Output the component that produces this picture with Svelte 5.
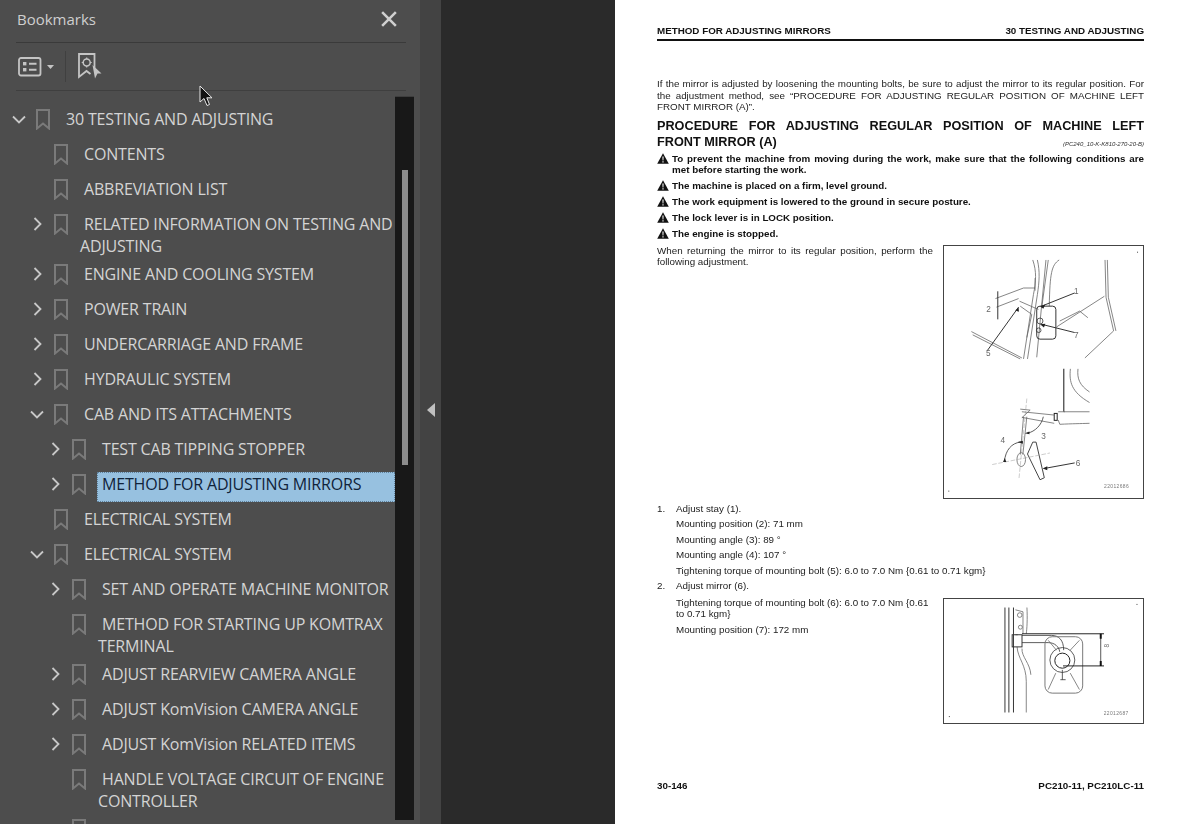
<script>
  const rows = [
    { l: 0, c: 'down', t: '30 TESTING AND ADJUSTING' },
    { l: 1, t: 'CONTENTS' },
    { l: 1, t: 'ABBREVIATION LIST' },
    { l: 1, c: 'right', t: 'RELATED INFORMATION ON TESTING AND ADJUSTING' },
    { l: 1, c: 'right', t: 'ENGINE AND COOLING SYSTEM' },
    { l: 1, c: 'right', t: 'POWER TRAIN' },
    { l: 1, c: 'right', t: 'UNDERCARRIAGE AND FRAME' },
    { l: 1, c: 'right', t: 'HYDRAULIC SYSTEM' },
    { l: 1, c: 'down', t: 'CAB AND ITS ATTACHMENTS' },
    { l: 2, c: 'right', t: 'TEST CAB TIPPING STOPPER' },
    { l: 2, c: 'right', t: 'METHOD FOR ADJUSTING MIRRORS', sel: true },
    { l: 1, t: 'ELECTRICAL SYSTEM' },
    { l: 1, c: 'down', t: 'ELECTRICAL SYSTEM' },
    { l: 2, c: 'right', t: 'SET AND OPERATE MACHINE MONITOR' },
    { l: 2, t: 'METHOD FOR STARTING UP KOMTRAX TERMINAL' },
    { l: 2, c: 'right', t: 'ADJUST REARVIEW CAMERA ANGLE' },
    { l: 2, c: 'right', t: 'ADJUST KomVision CAMERA ANGLE' },
    { l: 2, c: 'right', t: 'ADJUST KomVision RELATED ITEMS' },
    { l: 2, t: 'HANDLE VOLTAGE CIRCUIT OF ENGINE CONTROLLER' },
    { l: 2, t: '' }
  ];
  const warnings = [
    'The machine is placed on a firm, level ground.',
    'The work equipment is lowered to the ground in secure posture.',
    'The lock lever is in LOCK position.',
    'The engine is stopped.'
  ];
</script>

{#snippet tri()}
  <svg class="tri" viewBox="0 0 12 11"><path d="M6 0.3 11.8 10.7H0.2Z" fill="#111"/><path d="M5.4 3.6h1.2l-.2 4h-.8zM5.4 8.2h1.2v1.2H5.4z" fill="#fff"/></svg>
{/snippet}

<div class="app">
  <aside class="panel">
    <header class="head">
      <span class="title">Bookmarks</span>
      <svg class="close" viewBox="0 0 14 14"><path d="M1 1 13 13M13 1 1 13" stroke="#d0d0d0" stroke-width="2.2" fill="none"/></svg>
    </header>
    <div class="tools">
      <svg class="opt" viewBox="0 0 24 20" fill="none" stroke="#c4c4c4">
        <rect x="1" y="1" width="21.5" height="17.5" rx="2" stroke-width="1.8"/>
        <rect x="5" y="5" width="3.4" height="3.4" fill="#c4c4c4" stroke="none"/>
        <rect x="5" y="11" width="3.4" height="3.4" fill="#c4c4c4" stroke="none"/>
        <path d="M11 6.7h7.5M11 12.7h7.5" stroke-width="2"/>
      </svg>
      <svg class="caret" viewBox="0 0 7 4"><path d="M0 0h7L3.500 4z" fill="#c4c4c4"/></svg>
      <span class="sep"></span>
      <svg class="find" viewBox="0 0 24 26" fill="none" stroke="#c4c4c4">
        <path d="M16.500 15V1H1v23l7.500-6 4 3" stroke-width="1.800"/>
        <circle cx="8.700" cy="9.500" r="3.500" stroke-width="1.500"/>
        <path d="M8.700 4.500v1.500M8.700 13v1.500M3.700 9.500h1.500M12.200 9.500h1.500" stroke-width="1.200"/>
        <path d="M14.500 12 23.500 20.500H19.500L17 25.500Z" fill="#c4c4c4" stroke="none"/>
      </svg>
    </div>
    <div class="body">
      <ul class="tree">
        {#each rows as r}
          <li class="row lv{r.l}">
            <span class="chev">
              {#if r.c === 'down'}
                <svg viewBox="0 0 14 9"><path d="M1 1.500 7 7.500 13 1.500" fill="none" stroke="#c8c8c8" stroke-width="1.800"/></svg>
              {:else if r.c === 'right'}
                <svg class="rt" viewBox="0 0 9 14"><path d="M1.500 1 7.500 7 1.500 13" fill="none" stroke="#c8c8c8" stroke-width="1.800"/></svg>
              {/if}
            </span>
            <svg class="mark" viewBox="0 0 14 21"><path d="M1 1h12v18.500l-6-5-6 5z" fill="none" stroke="#7a7a7a" stroke-width="2"/></svg>
            <span class="label" class:sel={r.sel}>{r.t}</span>
          </li>
        {/each}
      </ul>
      <div class="scroll"><div class="thumb"></div></div>
    </div>
    <svg class="cursor" viewBox="0 0 14 22"><path d="M1 1V17L5 13.500 8 20.500 10.500 19.500 7.800 12.800H13Z" fill="#111" stroke="#e8e8e8" stroke-width="1"/></svg>
  </aside>

  <div class="gutter">
    <svg class="collapse" viewBox="0 0 8 14"><path d="M8 0V14L0 7Z" fill="#c0c0c0"/></svg>
  </div>

  <main class="stage">
    <article class="page">
      <div class="runhead"><span>METHOD FOR ADJUSTING MIRRORS</span><span>30 TESTING AND ADJUSTING</span></div>
      <p class="intro">If the mirror is adjusted by loosening the mounting bolts, be sure to adjust the mirror to its regular position. For the adjustment method, see “PROCEDURE FOR ADJUSTING REGULAR POSITION OF MACHINE LEFT FRONT MIRROR (A)”.</p>
      <h2 class="heading">PROCEDURE FOR ADJUSTING REGULAR POSITION OF MACHINE LEFT</h2>
      <div class="heading2"><span>FRONT MIRROR (A)</span><em>(PC240_10-K-K810-270-20-B)</em></div>
      <div class="warn first">{@render tri()}<p>To prevent the machine from moving during the work, make sure that the following conditions are met before starting the work.</p></div>
      {#each warnings as w}
        <div class="warn">{@render tri()}<p>{w}</p></div>
      {/each}

      <div class="split one">
        <p class="when">When returning the mirror to its regular position, perform the following adjustment.</p>
        <svg class="fig f1" viewBox="0 0 201 253">
          <g transform="translate(-3,-5) scale(.3333)" fill="none" stroke="#666" stroke-width="2.400">
            <path d="M278 55C290 90 288 120 280 160L250 355M292 55C300 90 298 120 292 160L262 355"/>
            <path d="M318 55 290 350M325 55 305 200M358 55C335 70 330 95 328 195"/>
            <path d="M497 55 500 168 523 270 436 352M504 55 507 168 530 270"/>
            <path d="M92 272 245 352M96 282 240 355"/>
            <path d="M165 172 250 140H285M285 110V148M168 198 235 172M238 180 295 205M240 195 275 220 260 290"/>
            <rect x="290" y="195" width="58" height="100" rx="10" stroke="#333" stroke-width="3"/>
            <path d="M350 258 495 165M360 240 420 210 445 230"/>
            <path d="M405 155 305 195M405 275 305 250M140 330 235 198" stroke="#333" stroke-width="3"/>
            <path d="M172 150V235" stroke="#333" stroke-width="3"/>
            <circle cx="300" cy="240" r="9" stroke="#333"/>
            <circle cx="296" cy="268" r="7" stroke="#333"/>
            <g fill="#666" stroke="none" font-family="Liberation Sans, sans-serif" font-size="25">
              <text x="403" y="158">1</text><text x="403" y="293">7</text><text x="136" y="345">5</text><text x="137" y="212">2</text>
            </g>
            <path d="M300 195 316 190 310 203ZM300 250 316 248 312 260ZM235 198 225 208 236 212Z" fill="#222" stroke="none"/>
            <rect x="594" y="30" width="3" height="3" fill="#444" stroke="none"/>
          </g>
          <g transform="translate(-3,120) scale(.3333)" fill="none" stroke="#666" stroke-width="2.400">
            <path d="M372 10V140" stroke="#333" stroke-width="3.500"/>
            <path d="M392 10C388 50 395 80 450 112M415 10C412 40 420 60 450 80"/>
            <path d="M372 140H450M360 178C400 176 420 176 450 175M355 140H375M360 178 355 165"/>
            <rect x="343" y="145" width="9" height="21" stroke="#222" stroke-width="3"/>
            <path d="M245 140 343 150M245 157 343 175"/>
            <path d="M250 155 240 270M260 155 248 270M240 132 270 135 245 158"/>
            <path d="M262 268 278 232 288 232 313 340 300 346Z" stroke="#444" stroke-width="3"/>
            <ellipse cx="243" cy="285" rx="13" ry="21"/>
            <path d="M260 100 236 345M155 300 330 265" stroke-dasharray="14 5" stroke="#999" stroke-width="1.500"/>
            <path d="M240 232C215 235 195 255 192 292M262 205C285 200 305 180 310 155" stroke="#333"/>
            <path d="M405 295 312 312" stroke="#333" stroke-width="3"/>
            <path d="M308 312 322 305 322 317ZM232 232 248 228 248 237ZM254 205 268 200 268 208ZM188 292H198L193 280Z" fill="#222" stroke="none"/>
            <g fill="#666" stroke="none" font-family="Liberation Sans, sans-serif" font-size="25">
              <text x="304" y="222">3</text><text x="180" y="235">4</text><text x="408" y="304">6</text>
            </g>
            <rect x="22" y="379" width="3" height="3" fill="#444" stroke="none"/>
          </g>
          <text x="187" y="244" class="code">22012686</text>
        </svg>
      </div>

      <ol class="steps">
        <li class="num"><span class="n">1.</span><span>Adjust stay (1).</span></li>
        <li class="sub">Mounting position (2): 71 mm</li>
        <li class="sub">Mounting angle (3): 89 °</li>
        <li class="sub">Mounting angle (4): 107 °</li>
        <li class="sub">Tightening torque of mounting bolt (5): 6.0 to 7.0 Nm {'{'}0.61 to 0.71 kgm{'}'}</li>
        <li class="num"><span class="n">2.</span><span>Adjust mirror (6).</span></li>
      </ol>

      <div class="split two">
        <div class="stepcol">
          <p>Tightening torque of mounting bolt (6): 6.0 to 7.0 Nm {'{'}0.61 to 0.71 kgm{'}'}</p>
          <p>Mounting position (7): 172 mm</p>
        </div>
        <svg class="fig f2" viewBox="0 0 201 126">
          <g transform="translate(-3,-3) scale(.3333)" fill="none" stroke="#666" stroke-width="2.400">
            <path d="M193 35V355M205 35V355M219 35V355" stroke="#333" stroke-width="3"/>
            <path d="M225 42 248 48 V115M232 118H225M260 35C262 70 260 100 258 115"/>
            <circle cx="238" cy="58" r="7"/><circle cx="240" cy="95" r="6"/>
            <path d="M230 155C232 190 258 210 258 260V355M245 160C243 185 270 205 272 240"/>
            <rect x="215" y="118" width="30" height="37" stroke="#333" stroke-width="3"/>
            <path d="M245 120H335C358 120 372 135 372 165M245 142H325 C345 142 358 155 360 170" stroke="#333"/>
            <rect x="315" y="124" width="115" height="172" rx="22" stroke="#777" stroke-width="3"/>
            <circle cx="368" cy="195" r="38" stroke="#333"/><circle cx="368" cy="197" r="23" stroke="#222" stroke-width="3"/>
            <path d="M325 135 350 165M420 135 392 165M325 285 348 235M420 285 392 235"/>
            <path d="M368 225V255M362 255H378" stroke="#333"/>
            <path d="M245 115H495M370 213H495" stroke="#222" stroke-width="3"/>
            <path d="M485 115V213" stroke="#333" stroke-width="2.500"/>
            <path d="M482 115H488V130H482ZM482 198H488V213H482Z" fill="#111" stroke="none"/>
            <text x="518" y="165" transform="rotate(-90 510 165)" fill="#666" stroke="none" font-family="Liberation Sans, sans-serif" font-size="20">8</text>
            <rect x="594" y="24" width="3" height="3" fill="#444" stroke="none"/>
            <rect x="22" y="366" width="3" height="3" fill="#444" stroke="none"/>
          </g>
          <text x="187" y="118" class="code">22012687</text>
        </svg>
      </div>

      <div class="foot"><span>30-146</span><span>PC210-11, PC210LC-11</span></div>
    </article>
  </main>
</div>

<style>
  :global(body) { margin: 0; background: #2a2a2a; }
  .app { display: flex; width: 1200px; height: 824px; overflow: hidden; font-family: "Open Sans", "Noto Sans", sans-serif; }

  .panel { position: relative; width: 420px; flex: none; background: #4d4d4d; display: flex; flex-direction: column; color: #d2d2d2; }
  .head { margin: 0 14px 0 16px; height: 43px; box-sizing: border-box; border-bottom: 1px solid #3a3a3a; display: flex; align-items: center; justify-content: space-between; padding: 0 8px 5px 1px; }
  .title { font-size: 15px; color: #cfcfcf; }
  .close { width: 16px; height: 16px; margin-right: 1px; }
  .tools { margin: 0 14px 0 16px; height: 48px; box-sizing: border-box; border-bottom: 1px solid #3f3f3f; display: flex; align-items: center; padding-left: 2px; }
  .opt { width: 24px; height: 20px; }
  .caret { width: 7px; height: 4px; margin-left: 5px; }
  .sep { width: 1px; height: 31px; background: #404040; margin-left: 11px; }
  .find { width: 24px; height: 26px; margin-left: 12px; margin-top: -2px; }
  .body { flex: 1; display: flex; min-height: 0; position: relative; overflow: hidden; }
  .tree { list-style: none; margin: 0; padding: 11px 0 0; width: 395px; flex: none; }
  .row { display: flex; min-height: 35px; box-sizing: border-box; padding-top: 6px; align-items: flex-start; font-size: 16px; line-height: 22px; letter-spacing: -0.17px; color: #d4d4d4; }
  .lv0 { padding-left: 12px; }
  .lv1 { padding-left: 30px; }
  .lv2 { padding-left: 48px; }
  .chev { width: 24px; height: 22px; flex: none; display: flex; align-items: center; }
  .chev svg { width: 14px; height: 9px; }
  .chev svg.rt { width: 9px; height: 14px; margin-left: 3px; }
  .mark { width: 14px; height: 21px; flex: none; margin-top: 1px; }
  .label { margin-left: 12px; text-indent: 4px; flex: 1; min-width: 0; }
  .label.sel { margin-left: 11px; text-indent: 5px; background: #97c1e0; color: #10233a; padding: 1px 0 7px; margin-top: -1px; margin-bottom: -8px; outline: 1px dotted #5f7f98; outline-offset: -1px; }
  .scroll { position: absolute; left: 395px; top: 5px; bottom: 4px; width: 19px; background: #181818; border-top: 1px solid #3e3e3e; }
  .thumb { position: absolute; left: 7px; width: 6px; top: 73px; height: 295px; background: #8c8c8c; }
  .cursor { position: absolute; left: 199px; top: 85px; width: 14px; height: 22px; }

  .gutter { width: 21px; flex: none; background: #434343; display: flex; align-items: center; justify-content: center; padding-bottom: 4px; box-sizing: border-box; }
  .collapse { width: 8px; height: 14px; }

  .stage { flex: 1; display: flex; background: #2a2a2a; justify-content: flex-end; }
  .page { width: 585px; height: 824px; box-sizing: border-box; background: #fff; padding: 25px 56px 0 42px; color: #222; font-family: "Liberation Sans", Arial, sans-serif; font-size: 9.8px; line-height: 11.5px; display: flex; flex-direction: column; filter: blur(0.3px); }
  .page p { margin: 0; }
  .runhead { display: flex; justify-content: space-between; font-weight: 700; font-size: 9.8px; line-height: 11px; color: #111; padding-bottom: 3px; border-bottom: 2px solid #111; }
  .intro { margin-top: 37px !important; text-align: justify; }
  .heading { margin: 5px 0 0; font-size: 12.7px; line-height: 16px; font-weight: 700; color: #111; text-align-last: justify; }
  .heading2 { display: flex; justify-content: space-between; align-items: baseline; font-size: 12.7px; line-height: 16px; font-weight: 700; color: #111; }
  .heading2 em { font-size: 6px; font-weight: 400; color: #333; }
  .warn { display: flex; gap: 3px; font-weight: 700; color: #111; margin-top: 4.5px; }
  .warn.first { margin-top: 1px; text-align: justify; }
  .warn p { flex: 1; }
  .tri { width: 12px; height: 11px; flex: none; }
  .split { display: flex; justify-content: space-between; align-items: flex-start; }
  .split.one { margin-top: 5px; }
  .when { width: 276px; text-align: justify; }
  .fig { display: block; width: 201px; border: 1px solid #444; box-sizing: border-box; background: #fff; flex: none; filter: blur(0.3px); }
  .f1 { height: 254px; }
  .f2 { height: 126px; margin-top: 4px; }
  .code { font: 5px "Liberation Sans", sans-serif; fill: #777; text-anchor: end; letter-spacing: .4px; }
  .steps { list-style: none; margin: 4px 0 0; padding: 0; }
  .steps li { margin-bottom: 4px; }
  .num { display: flex; }
  .n { width: 19px; flex: none; }
  .sub { padding-left: 19px; }
  .split.two { margin-top: -2px; }
  .stepcol { width: 276px; padding-left: 19px; box-sizing: border-box; padding-top: 3px; }
  .stepcol p + p { margin-top: 4px; }
  .foot { margin-top: auto; margin-bottom: 33px; display: flex; justify-content: space-between; font-weight: 700; font-size: 9.8px; line-height: 11px; color: #111; }
</style>
